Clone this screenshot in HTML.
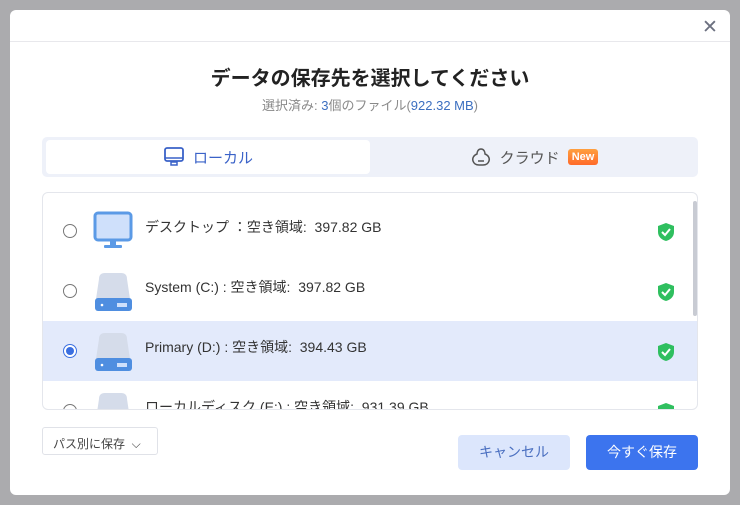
<!DOCTYPE html>
<html><head><meta charset="utf-8"><style>
*{box-sizing:border-box;margin:0;padding:0}
body{width:740px;height:505px;overflow:hidden;background:#a9aaad;font-family:"Liberation Sans","Noto Sans CJK JP",sans-serif;position:relative}
.bg{position:absolute;left:0;top:0;width:740px;height:505px;background:#ababae}
.dlg{position:absolute;left:10px;top:10px;width:720px;height:485px;background:#fff;border-radius:6px}
.hdr{position:absolute;left:0;top:0;width:720px;height:32px;border-bottom:1px solid #e8e8ec}
.x{position:absolute;left:692px;top:6px;font-size:19px;color:#6c7080;font-weight:300}
.t{position:absolute;top:52px;width:720px;text-align:center;font-size:20px;font-weight:bold;color:#222}
.s{position:absolute;top:85px;width:720px;text-align:center;font-size:13px;color:#8a8a8a}
.s b{font-weight:normal;color:#3c6fc0}
.tabs{position:absolute;left:32px;top:127px;width:656px;height:40px;background:#eef1f9;border-radius:5px}
.tab1{position:absolute;left:4px;top:3px;width:324px;height:34px;background:#fff;border-radius:4px;color:#3a62c8;font-size:15px;display:flex;align-items:center;justify-content:center;gap:8px}
.tab2{position:absolute;left:332px;top:3px;width:320px;height:34px;color:#555;font-size:15px;display:flex;align-items:center;justify-content:center;gap:8px}
.new{background:linear-gradient(#ffa040,#ff6a2a);color:#fff;font-size:11px;font-weight:bold;padding:2px 4px;border-radius:3px}
.list{position:absolute;left:32px;top:182px;width:656px;height:218px;border:1px solid #e4e6ec;border-radius:6px;overflow:hidden}
.row{position:absolute;left:0;width:654px;height:60px}
.row.sel{background:#e3eafb}
.radio{position:absolute;left:20px;top:23px;width:14px;height:14px;border:1px solid #777;border-radius:50%;background:#fff}
.sel .radio{border-color:#3b6fe0}
.sel .radio::after{content:"";position:absolute;left:2px;top:2px;width:8px;height:8px;border-radius:50%;background:#3b6fe0}
.ic{position:absolute;left:50px;top:10px}
.lbl{position:absolute;left:102px;top:16px;font-size:14px;color:#333}
.chk{position:absolute;left:614px;top:21px}
.sb{position:absolute;left:650px;top:8px;width:4px;height:115px;background:#c8cbd3;border-radius:2px}
.dd{position:absolute;left:32px;top:417px;width:116px;height:28px;border:1px solid #e0e2e8;border-radius:3px;font-size:12px;color:#444;padding:7px 0 0 10px}
.btn{position:absolute;top:425px;width:112px;height:35px;border-radius:4px;font-size:14px;text-align:center;line-height:35px}
.c{left:448px;background:#dce6fc;color:#4a6fc0}
.o{left:576px;background:#3c74ee;color:#fff}
</style></head><body>
<div class="bg"></div>
<div class="dlg">
<div class="hdr"><div class="x">✕</div></div>
<div class="t">データの保存先を選択してください</div>
<div class="s">選択済み: <b>3</b>個のファイル(<b>922.32 MB</b>)</div>
<div class="tabs">
<div class="tab1"><svg width="22" height="20" viewBox="0 0 22 20"><rect x="2" y="1" width="18" height="13" rx="2" fill="none" stroke="#3a62c8" stroke-width="1.8"/><line x1="2" y1="11" x2="20" y2="11" stroke="#3a62c8" stroke-width="1.5"/><rect x="8" y="15" width="6" height="3" fill="none" stroke="#3a62c8" stroke-width="1.5"/></svg>ローカル</div>
<div class="tab2"><svg width="22" height="22" viewBox="0 0 22 22"><path d="M11 3C8 3 7 6 7 8 4 9 2 12 3 15c1 3 3 4 6 4h4c3 0 5-1 6-4 1-3-1-6-4-7 0-2-1-5-4-5z" fill="none" stroke="#555" stroke-width="1.5"/><line x1="8" y1="15" x2="14" y2="15" stroke="#555" stroke-width="1.5"/></svg>クラウド <span class="new">New</span></div>
</div>
<div class="list">
<div class="row" style="top:8px"><div class="radio"></div>
<svg class="ic" width="40" height="40" viewBox="0 0 40 40"><rect x="2" y="2" width="36" height="27" rx="3" fill="#cfe0fb" stroke="#5b9ae6" stroke-width="3"/><rect x="17" y="29" width="6" height="5" fill="#5b9ae6"/><rect x="11" y="34" width="18" height="3" rx="1" fill="#5b9ae6"/></svg>
<div class="lbl">デスクトップ ：空き領域:&nbsp; 397.82 GB</div><svg class="chk" width="18" height="20" viewBox="0 0 18 20"><path d="M9 1L17 4V10C17 15 13 18 9 19 5 18 1 15 1 10V4Z" fill="#2fbf5f"/><path d="M5 10l3 3 5-6" stroke="#fff" stroke-width="2" fill="none"/></svg></div>
<div class="row" style="top:68px"><div class="radio"></div>
<svg class="ic" width="40" height="42" viewBox="0 0 40 42"><path d="M6 8Q6 2 12 2H28Q34 2 34 8L37 28H3Z" fill="#d5dcea"/><rect x="2" y="27" width="37" height="13" rx="3" fill="#4f8ee0"/><circle cx="9" cy="34" r="1.3" fill="#fff"/><rect x="24" y="32" width="10" height="4" fill="#cfe0fb"/></svg>
<div class="lbl">System (C:) : 空き領域:&nbsp; 397.82 GB</div><svg class="chk" width="18" height="20" viewBox="0 0 18 20"><path d="M9 1L17 4V10C17 15 13 18 9 19 5 18 1 15 1 10V4Z" fill="#2fbf5f"/><path d="M5 10l3 3 5-6" stroke="#fff" stroke-width="2" fill="none"/></svg></div>
<div class="row sel" style="top:128px"><div class="radio"></div>
<svg class="ic" width="40" height="42" viewBox="0 0 40 42"><path d="M6 8Q6 2 12 2H28Q34 2 34 8L37 28H3Z" fill="#d5dcea"/><rect x="2" y="27" width="37" height="13" rx="3" fill="#4f8ee0"/><circle cx="9" cy="34" r="1.3" fill="#fff"/><rect x="24" y="32" width="10" height="4" fill="#cfe0fb"/></svg>
<div class="lbl">Primary (D:) : 空き領域:&nbsp; 394.43 GB</div><svg class="chk" width="18" height="20" viewBox="0 0 18 20"><path d="M9 1L17 4V10C17 15 13 18 9 19 5 18 1 15 1 10V4Z" fill="#2fbf5f"/><path d="M5 10l3 3 5-6" stroke="#fff" stroke-width="2" fill="none"/></svg></div>
<div class="row" style="top:188px"><div class="radio"></div>
<svg class="ic" width="40" height="42" viewBox="0 0 40 42"><path d="M6 8Q6 2 12 2H28Q34 2 34 8L37 28H3Z" fill="#d5dcea"/></svg>
<div class="lbl">ローカルディスク (E:) : 空き領域:&nbsp; 931.39 GB</div><svg class="chk" width="18" height="20" viewBox="0 0 18 20"><path d="M9 1L17 4V10C17 15 13 18 9 19 5 18 1 15 1 10V4Z" fill="#2fbf5f"/></svg></div>
<div class="sb"></div>
</div>
<div class="dd">パス別に保存 &nbsp;⌵</div>
<div class="btn c">キャンセル</div>
<div class="btn o">今すぐ保存</div>
</div>
</body></html>
